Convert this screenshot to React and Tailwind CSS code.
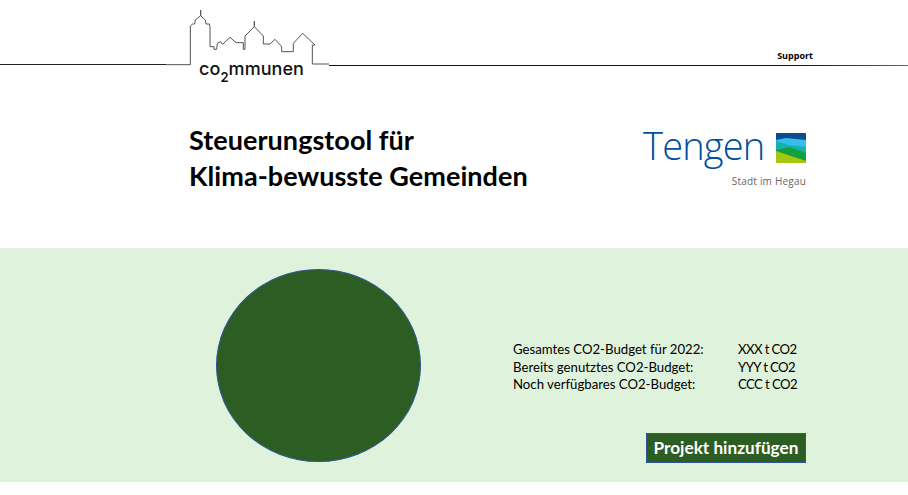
export default function App() {
  return (
    <div className="w-[908px] h-[495px] bg-white overflow-hidden font-['Lato',sans-serif] text-black">
      <header className="flex h-[80px] items-start">
        <div className="w-[166px] h-px mt-[64px] bg-[#222]" />
        <div className="w-[163px] flex flex-col items-center">
          <svg width="163" height="66" viewBox="48 0 489 198" fill="none" className="block">
            <path d="M48 194H121V78L128 72H134L136 60L152 47V30V47L166 60L168 72H178L180 80V140H192V148H200L202 130L212 125L218 133L240 112L258 128H280V148H285V108L313 80V63V80L340 108V132H360L375 118L395 140V155H430V130L458 100L495 135H487V192H537" stroke="#555" strokeWidth="3" />
          </svg>
          <div className="-mt-[6px] ml-[8px] text-[18px] leading-[18px] font-['Inter',sans-serif] font-medium text-[#111] tracking-[0.05px] whitespace-nowrap">
            co<sub className="text-[13px] font-semibold align-[-4px] leading-none">2</sub>mmunen
          </div>
        </div>
        <div className="flex-1 h-[66px] flex flex-col justify-end">
          <div className="self-end mr-[95px] mb-[3px] text-[9px] leading-[12px] font-bold font-['Open_Sans',sans-serif]">Support</div>
          <div className="h-px bg-gradient-to-r from-[#111] from-80% to-[#666]" />
        </div>
      </header>

      <section className="h-[168px] flex items-start pl-[189px]">
        <h1 className="mt-[42px] w-[454px] text-[27px] leading-[36px] font-bold tracking-[0.05px]">
          Steuerungstool für<br />Klima-bewusste Gemeinden
        </h1>
        <div className="mt-[43px] w-[163px] flex flex-col">
          <div className="flex items-start justify-between">
            <div className="text-[38px] leading-[45px] font-light text-[#00509e] font-['Open_Sans',sans-serif] tracking-[-0.8px]">Tengen</div>
            <svg width="30" height="30" viewBox="0 0 30 30" className="block mt-[10px]">
              <rect width="30" height="30" fill="#a4c810" />
              <path d="M0 0H30V28L0 18Z" fill="#15a03f" />
              <path d="M0 0H30V20L14 14L0 17Z" fill="#14b2a8" />
              <path d="M0 0H30V14L12 12L0 8Z" fill="#36bdea" />
              <path d="M0 0H30V7L10 5L0 7Z" fill="#0c4d8f" />
            </svg>
          </div>
          <div className="mt-[6px] text-right text-[10px] leading-[14px] tracking-[0.2px] text-[#666] font-['Open_Sans',sans-serif]">Stadt im Hegau</div>
        </div>
      </section>

      <section className="h-[234px] bg-[#dff2dc] flex pl-[216px]">
        <div className="mt-[21px] w-[205px] h-[193px] rounded-[50%] bg-[#2c5e24] border border-[#2f5597]" />
        <div className="ml-[92px] w-[293px] flex flex-col">
          <div className="mt-[93px] grid grid-cols-[225px_1fr] text-[13.2px] leading-[17.6px] whitespace-nowrap">
            <span>Gesamtes CO2-Budget für 2022:</span><span className="tracking-[-0.6px]">XXX t CO2</span>
            <span>Bereits genutztes CO2-Budget:</span><span className="tracking-[-0.6px]">YYY t CO2</span>
            <span>Noch verfügbares CO2-Budget:</span><span className="tracking-[-0.6px]">CCC t CO2</span>
          </div>
          <button className="mt-[39px] self-end w-[160px] h-[30px] bg-[#2c5e24] border border-[#2f5597] text-white text-[17.2px] leading-none font-bold whitespace-nowrap">
            Projekt hinzufügen
          </button>
        </div>
      </section>
    </div>
  );
}
